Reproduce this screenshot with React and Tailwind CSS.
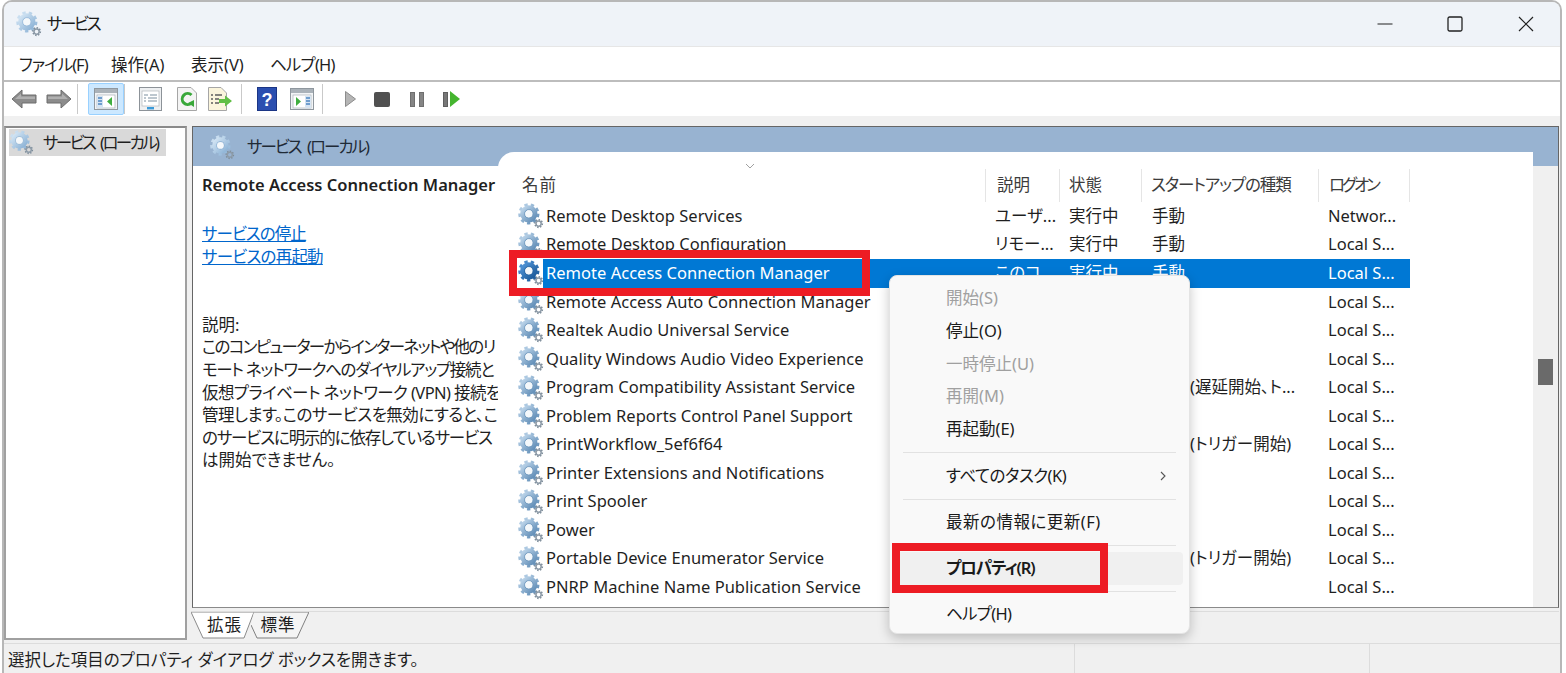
import React from 'react';

const FONT = "font-['Noto_Sans','Noto_Sans_CJK_JP',sans-serif] [font-feature-settings:'palt']";

const rows = [
  { name: 'Remote Desktop Services', desc: 'ユーザ...', state: '実行中', start: '手動', logon: 'Networ...' },
  { name: 'Remote Desktop Configuration', desc: 'リモー...', state: '実行中', start: '手動', logon: 'Local S...' },
  { name: 'Remote Access Connection Manager', desc: 'このコ...', state: '実行中', start: '手動', logon: 'Local S...', selected: true },
  { name: 'Remote Access Auto Connection Manager', desc: '', state: '', start: '', logon: 'Local S...' },
  { name: 'Realtek Audio Universal Service', desc: '', state: '', start: '', logon: 'Local S...' },
  { name: 'Quality Windows Audio Video Experience', desc: '', state: '', start: '', logon: 'Local S...' },
  { name: 'Program Compatibility Assistant Service', desc: '', state: '', start: '', extra: '(遅延開始、ト...', logon: 'Local S...' },
  { name: 'Problem Reports Control Panel Support', desc: '', state: '', start: '', logon: 'Local S...' },
  { name: 'PrintWorkflow_5ef6f64', desc: '', state: '', start: '', extra: '(トリガー開始)', logon: 'Local S...' },
  { name: 'Printer Extensions and Notifications', desc: '', state: '', start: '', logon: 'Local S...' },
  { name: 'Print Spooler', desc: '', state: '', start: '', logon: 'Local S...' },
  { name: 'Power', desc: '', state: '', start: '', logon: 'Local S...' },
  { name: 'Portable Device Enumerator Service', desc: '', state: '', start: '', extra: '(トリガー開始)', logon: 'Local S...' },
  { name: 'PNRP Machine Name Publication Service', desc: '', state: '', start: '', logon: 'Local S...' },
  { name: '', desc: '', state: '', start: '', logon: '' },
];

const Gear = ({ size = 24, dark = false, pale = false }) => {
  const id = dark ? 'gear-dark' : pale ? 'gear-pale' : 'gear-mid';
  const light = dark ? '#4f93d6' : pale ? '#d3e5f4' : '#bdd5ea';
  const deep = dark ? '#1c5a99' : pale ? '#8db3d6' : '#5f8cb6';
  return (
    <svg width={size} height={size} viewBox="0 0 24 24" className="shrink-0">
      <defs>
        <linearGradient id={id} x1="0" y1="0" x2="1" y2="1">
          <stop offset="0" stopColor={light} />
          <stop offset="1" stopColor={deep} />
        </linearGradient>
      </defs>
      <circle cx="10" cy="10" r="8.3" fill="none" stroke={`url(#${id})`} strokeWidth="3" strokeDasharray="3 2.8" />
      <circle cx="10" cy="10" r="5.8" fill="none" stroke={`url(#${id})`} strokeWidth="4.2" />
      <circle cx="10" cy="10" r="3.7" fill="none" stroke={deep} strokeWidth="0.8" />
      <circle cx="10" cy="10" r="3.3" fill="#f4f8fb" />
      <circle cx="19" cy="19" r="3.4" fill="none" stroke="#7d8c99" strokeWidth="1.6" strokeDasharray="1.3 1.3" />
      <circle cx="19" cy="19" r="2.4" fill="none" stroke="#8d9ba8" strokeWidth="1.4" />
    </svg>
  );
};

const Arrow = ({ flip }) => (
  <svg width="26" height="22" viewBox="0 0 26 22" className={flip ? '-scale-x-100' : ''}>
    <path d="M1 11 L11 2 V7 H25 V15 H11 V20 Z" fill="#8c8c8c" stroke="#6d6d6d" strokeWidth="1" />
    <path d="M4 11 L10 5.5 V8.5 H24 V11 Z" fill="#b0b0b0" />
  </svg>
);

const PaneIcon = ({ right }) => (
  <svg width="24" height="22" viewBox="0 0 24 22">
    <rect x="0.5" y="0.5" width="23" height="21" fill="#f2f4f6" stroke="#8f979e" />
    <rect x="1" y="1" width="22" height="4" fill="#aab2b9" />
    <rect x="3" y="7" width="18" height="13" fill="#fff" stroke="#a9b1b8" strokeWidth="0.7" />
    {right ? (
      <>
        <rect x="15" y="8" width="6" height="12" fill="#d6e4f2" />
        <path d="M16 10h4M16 13h4M16 16h4" stroke="#4d86c2" strokeWidth="1.6" />
        <path d="M6 9 L11 13.5 L6 18 Z" fill="#3fae3f" />
      </>
    ) : (
      <>
        <rect x="3" y="8" width="6" height="12" fill="#d6e4f2" />
        <path d="M4 10h4M4 13h4M4 16h4" stroke="#4d86c2" strokeWidth="1.6" />
        <path d="M18 9 L13 13.5 L18 18 Z" fill="#3fae3f" />
      </>
    )}
  </svg>
);

const Toolbar = () => (
  <div className="flex items-center h-[34px] bg-white pl-[7px] shrink-0">
    <Arrow />
    <span className="w-[9px]" />
    <Arrow flip />
    <span className="w-[6px] h-[30px] border-r border-[#c9c9c9]" />
    <span className="ml-[10px] w-[36px] h-[32px] flex items-center justify-center bg-[#cce8ff] border border-[#99d1ff] rounded-[2px]">
      <PaneIcon />
    </span>
    <span className="w-px h-[30px] bg-[#c9c9c9]" />
    <span className="ml-[14px]">
      <svg width="23" height="24" viewBox="0 0 23 24">
        <rect x="0.5" y="0.5" width="22" height="23" fill="#eef0f2" stroke="#8c9298" />
        <rect x="3" y="4" width="17" height="15" fill="#fff" stroke="#b2b7bc" strokeWidth="0.7" />
        <path d="M5 8h4M11 8h7M5 11h2M9 11h9M5 14h2M9 14h9" stroke="#7d8f9f" strokeWidth="1.2" />
        <rect x="8" y="20" width="7" height="2.4" fill="#3a9ad9" />
      </svg>
    </span>
    <span className="ml-[15px]">
      <svg width="20" height="24" viewBox="0 0 20 24">
        <path d="M0.5 0.5H14L19.5 6V23.5H0.5Z" fill="#f4f4f4" stroke="#a6a6a6" />
        <path d="M14.5 8a5.5 5.5 0 1 0 0 8" fill="none" stroke="#39a83a" strokeWidth="3" />
        <path d="M11 16 L17 20 L17 13 Z" fill="#39a83a" />
      </svg>
    </span>
    <span className="ml-[11px]">
      <svg width="25" height="24" viewBox="0 0 25 24">
        <path d="M0.5 0.5H13L18.5 6V23.5H0.5Z" fill="#fbf5dc" stroke="#a6a6a6" />
        <path d="M3 8h2M7 8h7M3 12h2M7 12h4M3 16h2M7 16h4" stroke="#5e5e5e" strokeWidth="1.3" />
        <path d="M11 12 H17 V8.5 L24 14 L17 19.5 V16 H11 Z" fill="#62bf45" />
      </svg>
    </span>
    <span className="ml-[8px] w-px h-[30px] bg-[#c9c9c9]" />
    <span className="ml-[15px]">
      <svg width="20" height="24" viewBox="0 0 20 24">
        <rect x="0.5" y="0.5" width="19" height="23" fill="#2b4fb0" stroke="#1b3585" />
        <text x="10" y="18.5" textAnchor="middle" fontSize="18" fontWeight="700" fill="#fff" fontFamily="Liberation Sans, sans-serif">?</text>
      </svg>
    </span>
    <span className="ml-[13px]"><PaneIcon right /></span>
    <span className="ml-[8px] w-px h-[30px] bg-[#c9c9c9]" />
    <span className="ml-[22px]">
      <svg width="11" height="16" viewBox="0 0 11 16"><path d="M0.5 0.5 L10.5 8 L0.5 15.5 Z" fill="#b5b5b5" stroke="#8d8d8d" /></svg>
    </span>
    <span className="ml-[18px] w-[16px] h-[15px] rounded-[2px] bg-[#505050]" />
    <span className="ml-[20px] flex gap-[4px]">
      <span className="w-[5px] h-[15px] bg-[#858585] border border-[#6f6f6f]" />
      <span className="w-[5px] h-[15px] bg-[#858585] border border-[#6f6f6f]" />
    </span>
    <span className="ml-[19px] flex items-center gap-[2px]">
      <span className="w-[5px] h-[15px] bg-[#777] border border-[#5f5f5f]" />
      <svg width="10" height="16" viewBox="0 0 10 16"><path d="M0 0 L10 8 L0 16 Z" fill="#45b52f" /></svg>
    </span>
  </div>
);

const HeaderCell = ({ className, children }) => (
  <div className={`flex items-center h-full border-r border-[#e5e5e5] text-[#3c3c3c] ${className}`}>{children}</div>
);

const Row = ({ row }) => (
  <div className="flex h-[28.55px] w-[912px] items-center text-[#1f1f1f]">
    <div className="ml-[20px] w-[25px] flex items-center">
      {row.name && <Gear size={26} dark={row.selected} />}
    </div>
    <div className={`flex flex-1 h-full items-center ${row.selected ? 'bg-[#0078d4] text-white' : ''}`}>
      <div className="w-[441px] pl-[3px] truncate tracking-[0.02px]">{row.name}</div>
      <div className="w-[74px] pl-[11px]">{row.desc}</div>
      <div className="w-[82px] pl-[11px]">{row.state}</div>
      <div className="w-[177px] pl-[12px] whitespace-nowrap">
        {row.start}
        {row.extra && <span className="pl-[38px]">{row.extra}</span>}
      </div>
      <div className="w-[91px] pl-[11px]">{row.logon}</div>
    </div>
  </div>
);

const MenuItem = ({ label, disabled, active, arrow, className = '' }) => (
  <div className={`flex items-center justify-between h-[32.8px] mx-[6px] pl-[50px] pr-[16px] rounded-[4px] ${disabled ? 'text-[#a0a0a0]' : 'text-[#1a1a1a]'} ${active ? 'bg-[#f0f0f0] font-semibold' : ''}`}>
    <span className={className}>{label}</span>
    {arrow && (
      <svg width="8" height="10" viewBox="0 0 8 10"><path d="M2 1 L6 5 L2 9" fill="none" stroke="#555" strokeWidth="1.1" /></svg>
    )}
  </div>
);

const MenuLine = () => <div className="h-px mx-[13px] my-[6.25px] bg-[#e2e2e2]" />;

const ContextMenu = () => (
  <div className="absolute left-[889px] top-[275px] w-[301px] h-[359px] z-20 pt-[6px] bg-[#f9f9f9] border border-[#e4e4e4] rounded-[8px] shadow-[0_4px_12px_rgba(0,0,0,0.22)]">
    <MenuItem label="開始(S)" disabled />
    <MenuItem label="停止(O)" />
    <MenuItem label="一時停止(U)" disabled />
    <MenuItem label="再開(M)" disabled />
    <MenuItem label="再起動(E)" />
    <MenuLine />
    <MenuItem label="すべてのタスク(K)" arrow className="tracking-[-0.5px]" />
    <MenuLine />
    <MenuItem label="最新の情報に更新(F)" className="tracking-[0.5px]" />
    <MenuLine />
    <MenuItem label="プロパティ(R)" active className="tracking-[-1.1px]" />
    <MenuLine />
    <MenuItem label="ヘルプ(H)" className="tracking-[-0.7px]" />
  </div>
);

const App = () => (
  <div className={`relative w-[1566px] h-[673px] overflow-hidden bg-white text-[16.5px] ${FONT}`}>
    <div className="ml-[2px] mr-[4px] h-[680px] flex flex-col border-x-[2px] border-t-[2px] border-[#b7b7b7] rounded-t-[10px] overflow-hidden bg-[#f0f0f0]">
      {/* title bar */}
      <div className="flex items-center h-[45px] bg-[#eff3f8] border-b border-[#e6e6e6] shrink-0">
        <span className="ml-[12px]"><Gear size={26} pale /></span>
        <span className="ml-[5px] text-[#1a1a1a] tracking-[-2.4px]">サービス</span>
        <div className="ml-auto flex items-center">
          <svg width="16" height="16" viewBox="0 0 16 16"><path d="M0.5 8H15.5" stroke="#222" strokeWidth="1.2" /></svg>
          <svg className="ml-[54px]" width="16" height="16" viewBox="0 0 16 16"><rect x="1" y="1" width="14" height="14" rx="1.5" fill="none" stroke="#222" strokeWidth="1.3" /></svg>
          <svg className="ml-[55px] mr-[26px]" width="16" height="16" viewBox="0 0 16 16"><path d="M1 1L15 15M15 1L1 15" stroke="#222" strokeWidth="1.2" /></svg>
        </div>
      </div>
      {/* menu bar */}
      <div className="flex items-center h-[35px] bg-white border-b-2 border-[#bdbdbd] pl-[15px] pt-[3px] text-[#1f1f1f] shrink-0">
        <span className="w-[92px] tracking-[-1px]">ファイル(F)</span>
        <span className="w-[80px]">操作(A)</span>
        <span className="w-[79px]">表示(V)</span>
        <span className="tracking-[-0.8px]">ヘルプ(H)</span>
      </div>
      <Toolbar />
      <div className="h-[10px] shrink-0" />
      {/* panes */}
      <div className="flex h-[514px] shrink-0">
        <div className="w-[183px] h-full bg-white border-2 border-[#a0a0a0] border-t-[#8a8a8a] pt-[1px] pl-[3px]">
          <div className="flex items-center w-[157px] h-[27px] bg-[#d9d9d9] text-[#1f1f1f] whitespace-nowrap">
            <Gear size={25} pale />
            <span className="ml-[9px] tracking-[-2.6px] [word-spacing:4px] pt-[2px]">サービス (ローカル)</span>
          </div>
        </div>
        <div className="ml-[5px] w-[1367px] flex flex-col">
          <div className="h-[483px] flex flex-col border border-[#666] border-b-[#8a8a8a] overflow-hidden bg-white">
            <div className="flex items-center h-[39px] bg-[#98b3d1] pl-[17px] pt-[2px] shrink-0 text-[#1f2a36]">
              <Gear size={25} pale />
              <span className="ml-[12px] tracking-[-2px] [word-spacing:4px]">サービス (ローカル)</span>
            </div>
            <div className="flex flex-1 min-h-0">
              <div className="w-[305px] pl-[9px] pt-[7px] bg-white shrink-0 text-[#1f1f1f]">
                <div className="font-semibold whitespace-nowrap">Remote Access Connection Manager</div>
                <div className="mt-[24px] text-[#0066cc] underline leading-[23px]">
                  <div className="tracking-[-1px]">サービスの停止</div>
                  <div className="tracking-[-0.8px]">サービスの再起動</div>
                </div>
                <div className="mt-[46px] leading-[22.6px] whitespace-nowrap">
                  <div>説明:</div>
                  <div className="tracking-[-1.7px]">このコンピューターからインターネットや他のリ</div>
                  <div className="tracking-[-1.3px]">モート ネットワークへのダイヤルアップ接続と</div>
                  <div className="tracking-[-0.6px]">仮想プライベート ネットワーク (VPN) 接続を</div>
                  <div className="tracking-[-0.5px]">管理します。このサービスを無効にすると、こ</div>
                  <div className="tracking-[-1.15px]">のサービスに明示的に依存しているサービス</div>
                  <div>は開始できません。</div>
                </div>
              </div>
              <div className="relative z-10 -mt-[14px] flex-1 bg-white rounded-tl-[16px] overflow-hidden">
                <div className="flex justify-center w-[504px] h-[17px] items-end">
                  <svg width="10" height="6" viewBox="0 0 10 6"><path d="M1 1L5 5L9 1" fill="none" stroke="#a0a0a0" strokeWidth="1" /></svg>
                </div>
                <div className="flex items-center w-[912px] h-[33px]">
                  <HeaderCell className="w-[488px] pl-[24px] tracking-[1px]">名前</HeaderCell>
                  <HeaderCell className="w-[74px] pl-[11px]">説明</HeaderCell>
                  <HeaderCell className="w-[82px] pl-[9px]">状態</HeaderCell>
                  <HeaderCell className="w-[177px] pl-[9px] tracking-[-1.1px]">スタートアップの種類</HeaderCell>
                  <HeaderCell className="w-[91px] pl-[10px] tracking-[-3px]">ログオン</HeaderCell>
                </div>
                {rows.map((row, i) => (
                  <Row key={i} row={row} />
                ))}
              </div>
              <div className="w-[25px] bg-[#f0f0f0] shrink-0 pl-[5px] pt-[193px]">
                <div className="w-[15px] h-[26px] bg-[#6a6a6a]" />
              </div>
            </div>
          </div>
          {/* tabs */}
          <div className="flex h-[29px] border-t border-[#dcdcdc] mt-[3px] -ml-px">
            <div className="relative w-[63px] h-[27px] flex items-center justify-center pl-[4px]">
              <svg className="absolute inset-0" width="63" height="27" viewBox="0 0 63 27">
                <path d="M0 0 L12 26 H53 L63 0 Z" fill="#fff" stroke="#8a8a8a" />
              </svg>
              <span className="relative text-[#1f1f1f] tracking-[1px]">拡張</span>
            </div>
            <div className="relative -ml-[3px] w-[58px] h-[27px] flex items-center justify-center pr-[4px]">
              <svg className="absolute inset-0" width="58" height="27" viewBox="0 0 58 27">
                <path d="M3 0 H58 L46 26 H6 L0 13" fill="#f4f4f4" stroke="#7f7f7f" />
              </svg>
              <span className="relative text-[#1f1f1f] tracking-[1px]">標準</span>
            </div>
          </div>
        </div>
      </div>
      {/* status bar */}
      <div className="flex items-center h-[33px] mt-[3px] border-t border-[#dcdcdc] pl-[4px] text-[#1f1f1f] shrink-0">
        <span className="w-[1066px]">選択した項目のプロパティ ダイアログ ボックスを開きます。</span>
        <span className="w-[295px] h-full border-l border-[#dcdcdc]" />
        <span className="h-full border-l border-[#dcdcdc]" />
      </div>
    </div>

    <ContextMenu />
    {/* red annotation boxes */}
    <div className="absolute left-[509px] top-[250px] w-[361px] h-[46px] z-30 border-[8px] border-[#ed1c24]" />
    <div className="absolute left-[892px] top-[543px] w-[216px] h-[50px] z-30 border-[8px] border-[#ed1c24]" />
  </div>
);

export default App;
